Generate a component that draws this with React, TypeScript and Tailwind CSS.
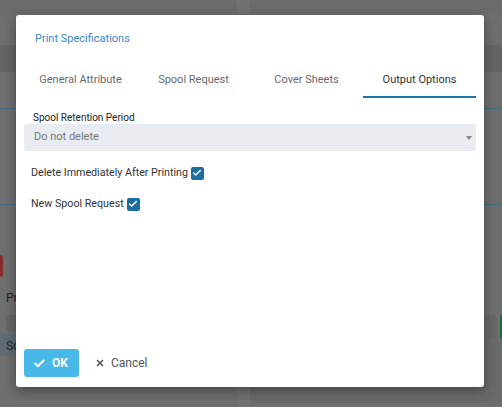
import { Check, X } from 'lucide-react'

const tabs = ['General Attribute', 'Spool Request', 'Cover Sheets', 'Output Options']

function Backdrop() {
  return (
    <div className="flex h-[407px] w-[502px] overflow-hidden bg-[#6e6e6e]">
      <div className="flex w-[237px] shrink-0 flex-col">
        <div className="h-[14px] bg-[#6b6b6b]" />
        <div className="h-[31px]" />
        <div className="h-[27px] bg-[#646464]" />
        <div className="h-[36px]" />
        <div className="h-px bg-[#3f6a78]" />
        <div className="h-[95px]" />
        <div className="h-px bg-[#3f6a78]" />
        <div className="h-[50px]" />
        <div className="h-[22px] w-[3px] rounded-r bg-[#8a2b2b]" />
        <div className="h-[38px] pl-[6px] pt-[12px] text-[12px] text-[#222]">Pr</div>
        <div className="ml-[6px] h-[17px] rounded-sm bg-[#656565]" />
        <div className="mt-[2px] h-[22px] bg-[#5f6c74] pl-[6px] pt-[3px] text-[12px] text-[#222]">So</div>
      </div>
      <div className="w-[13px] shrink-0 bg-[#717171]" />
      <div className="flex flex-1 flex-col">
        <div className="h-[14px] bg-[#6b6b6b]" />
        <div className="h-[31px]" />
        <div className="h-[27px] bg-[#646464]" />
        <div className="h-[36px]" />
        <div className="h-px bg-[#3f6a78]" />
        <div className="h-[95px]" />
        <div className="h-px bg-[#3f6a78]" />
        <div className="h-[110px]" />
        <div className="flex h-[24px] justify-end gap-[3px]">
          <div className="w-[18px] rounded-sm bg-[#676767]" />
          <div className="w-[2px] bg-[#1f6b3a]" />
        </div>
        <div className="h-[64px] bg-[#6a6a6a]" />
      </div>
    </div>
  )
}

function Checkbox() {
  return (
    <span className="inline-flex h-[13px] w-[13px] items-center justify-center rounded-[2px] bg-[#1b6f9f]">
      <Check className="h-[10px] w-[10px] text-white" strokeWidth={3.5} />
    </span>
  )
}

export default function App() {
  return (
    <div className="relative h-[407px] w-[502px] font-['Roboto',sans-serif]">
      <Backdrop />
      <div className="absolute left-[16px] top-[15px] flex h-[372px] w-[468px] flex-col rounded-[3px] bg-white px-[8px] shadow-[0_4px_12px_rgba(0,0,0,0.35)]">
        <div className="px-[11px] pt-[17px] text-[11px] leading-[14px] text-[#3b87c4]">Print Specifications</div>
        <div className="mt-[27px] grid grid-cols-4">
          {tabs.map((t, i) => (
            <div
              key={t}
              className={`border-b-2 pb-[9px] text-center text-[11px] leading-[14px] ${
                i === 3 ? 'border-[#1b78a8] text-[#333]' : 'border-transparent text-[#6a6a6a]'
              }`}
            >
              {t}
            </div>
          ))}
        </div>
        <div className="mt-[13px] px-[9px] text-[10px] leading-[13px] text-[#222]">Spool Retention Period</div>
        <div className="flex h-[27px] items-center justify-between rounded-[3px] bg-[#e8ebef] pl-[10px] pr-[4px]">
          <span className="text-[11px] text-[#777]">Do not delete</span>
          <span className="h-0 w-0 border-x-[3px] border-t-[4px] border-x-transparent border-t-[#888]" />
        </div>
        <div className="mt-[14px] flex items-center gap-[3px] px-[7px] text-[10.7px] text-[#333]">
          <span>Delete Immediately After Printing</span>
          <Checkbox />
        </div>
        <div className="mt-[15px] flex items-center gap-[3px] px-[7px] text-[10.7px] text-[#333]">
          <span>New Spool Request</span>
          <Checkbox />
        </div>
        <div className="mt-auto mb-[10px] flex items-center gap-[16px]">
          <button className="flex h-[28px] w-[55px] items-center gap-[6px] rounded-[3px] bg-[#47b8e8] pl-[9px] text-[12px] font-bold text-white">
            <Check className="h-[13px] w-[13px]" strokeWidth={3.5} />
            OK
          </button>
          <button className="flex items-center gap-[6px] text-[12px] text-[#555]">
            <X className="h-[10px] w-[10px] text-[#555]" strokeWidth={4} />
            Cancel
          </button>
        </div>
      </div>
    </div>
  )
}
